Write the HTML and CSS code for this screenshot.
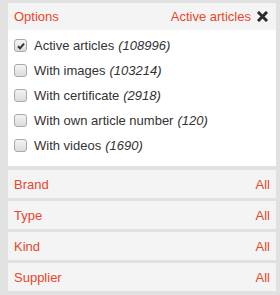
FILE: index.html
```html
<!DOCTYPE html>
<html>
<head>
<meta charset="utf-8">
<link rel="stylesheet" href="styles.css">
</head>
<body>
<div class="panel">
  <div class="head">
    <span class="title">Options</span>
    <span class="active">Active articles
      <svg class="close" width="11" height="11" viewBox="0 0 11 11"><path d="M2 2 L9 9 M9 2 L2 9" stroke="#2b2b2b" stroke-width="3" stroke-linecap="square"/></svg>
    </span>
  </div>
  <ul class="opts">
    <li><span class="cb checked"><svg width="10" height="10" viewBox="0 0 10 10"><path d="M2 5.2 L4 7.3 L8 2.6" fill="none" stroke="#333" stroke-width="2"/></svg></span>Active articles <i>(108996)</i></li>
    <li><span class="cb"></span>With images <i>(103214)</i></li>
    <li><span class="cb"></span>With certificate <i>(2918)</i></li>
    <li><span class="cb"></span>With own article number <i>(120)</i></li>
    <li><span class="cb"></span>With videos <i>(1690)</i></li>
  </ul>
</div>
<div class="row"><span>Brand</span><span>All</span></div>
<div class="row"><span>Type</span><span>All</span></div>
<div class="row"><span>Kind</span><span>All</span></div>
<div class="row"><span>Supplier</span><span>All</span></div>
</body>
</html>
```
FILE: styles.css
```css
html, body { margin: 0; }
body {
  background: #e1e1e1;
  padding: 3px 4px 4px 8px;
  font-family: "Liberation Sans", Arial, sans-serif;
  font-size: 13px;
  color: #333;
  display: flex;
  flex-direction: column;
  gap: 3px;
}
.panel { display: flex; flex-direction: column; margin-bottom: 1px; }
.head {
  background: #f4f4f4;
  height: 27px;
  display: flex;
  align-items: center;
  justify-content: space-between;
  padding: 0 8px 0 6px;
  color: #e8452c;
}
.active { display: flex; align-items: center; gap: 6px; }
.close { display: block; }
.opts {
  list-style: none;
  margin: 0;
  padding: 3px 0 8px 6px;
  background: #fff;
}
.opts li {
  height: 25px;
  display: flex;
  align-items: center;
  color: #333;
}
.opts i { margin-left: 4px; color: #333; }
.cb {
  width: 11px;
  height: 11px;
  border: 1px solid #a9a9a9;
  border-radius: 3px;
  background: linear-gradient(#f3f3f3, #dcdcdc);
  margin-right: 7px;
  display: flex;
  align-items: center;
  justify-content: center;
}
.row {
  background: #f4f4f4;
  height: 28px;
  display: flex;
  align-items: center;
  justify-content: space-between;
  padding: 0 6px;
  color: #e8452c;
}
```
